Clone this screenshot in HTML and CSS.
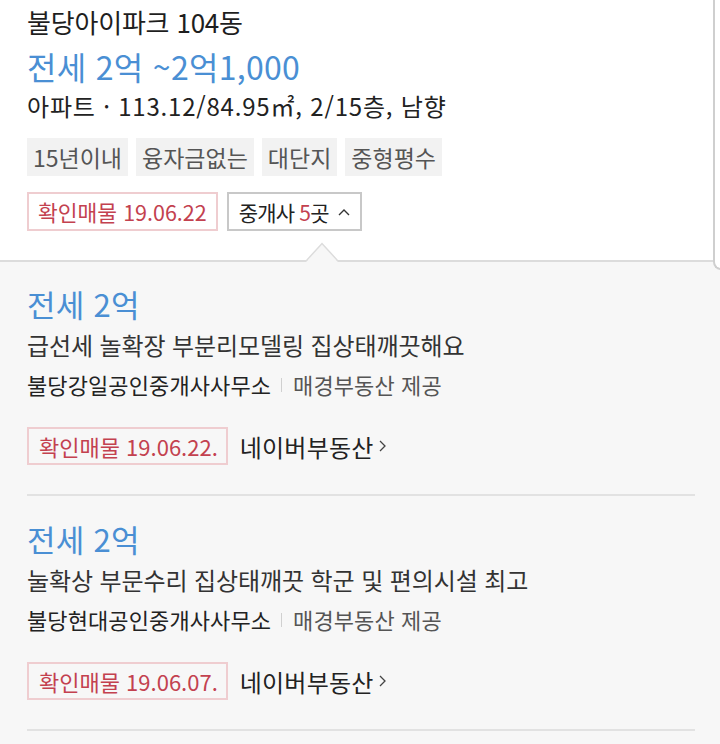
FILE: index.html
```html
<!DOCTYPE html>
<html lang="ko">
<head>
<meta charset="utf-8">
<link rel="stylesheet" href="styles.css">
</head>
<body>
<div class="page">
  <section class="summary">
    <div class="next-card"></div>
    <h1 class="apt-name">불당아이파크 104동</h1>
    <div class="price">전세 2억 ~2억1,000</div>
    <div class="spec">아파트 · 113.12/84.95㎡, 2/15층, 남향</div>
    <ul class="tags">
      <li class="tag">15년이내</li>
      <li class="tag">융자금없는</li>
      <li class="tag">대단지</li>
      <li class="tag">중형평수</li>
    </ul>
    <div class="badge-row">
      <span class="verified">확인매물 19.06.22</span>
      <button class="agents">중개사 <em>5</em>곳
        <svg class="chev-up" width="14" height="10" viewBox="0 0 14 10"><polyline points="2,8 7,3 12,8" fill="none" stroke="#333" stroke-width="1.4"/></svg>
      </button>
    </div>
    <svg class="notch" width="32" height="20" viewBox="0 0 32 20"><polygon points="0,20 16,2 32,20" fill="#f7f7f7"/><polyline points="0,19 16,1.5 32,19" fill="none" stroke="#dcdcdc" stroke-width="1.5"/></svg>
  </section>

  <section class="listings">
    <article class="item">
      <div class="item-price">전세 2억</div>
      <p class="desc">급선세 놀확장 부분리모델링 집상태깨끗해요</p>
      <div class="agency"><span class="agency-name">불당강일공인중개사사무소</span><span class="sep"></span><span class="provider">매경부동산 제공</span></div>
      <div class="item-foot">
        <span class="verified big">확인매물 19.06.22.</span>
        <a class="naver">네이버부동산<svg class="chev-right" width="10" height="16" viewBox="0 0 10 16"><polyline points="2,3 7,8 2,13" fill="none" stroke="#444" stroke-width="1.3"/></svg></a>
      </div>
    </article>
    <article class="item">
      <div class="item-price">전세 2억</div>
      <p class="desc">눌확상 부문수리 집상태깨끗 학군 및 편의시설 최고</p>
      <div class="agency"><span class="agency-name">불당현대공인중개사사무소</span><span class="sep"></span><span class="provider">매경부동산 제공</span></div>
      <div class="item-foot">
        <span class="verified big">확인매물 19.06.07.</span>
        <a class="naver">네이버부동산<svg class="chev-right" width="10" height="16" viewBox="0 0 10 16"><polyline points="2,3 7,8 2,13" fill="none" stroke="#444" stroke-width="1.3"/></svg></a>
      </div>
    </article>
  </section>
</div>
</body>
</html>
```

FILE: styles.css
```css
* { box-sizing: border-box; }
html, body {
  margin: 0;
  padding: 0;
  background: #f7f7f7;
  font-family: "Noto Sans CJK KR", "Noto Sans", sans-serif;
  color: #222;
  overflow: hidden;
}
.page { width: 720px; height: 744px; overflow: hidden; }

.summary {
  position: relative;
  background: #fff;
  width: 720px;
  padding: 4px 0 29px 27px;
  border-bottom: 2px solid #dcdcdc;
}
.next-card {
  position: absolute;
  left: 713px;
  top: -10px;
  width: 20px;
  height: 280px;
  border: 2px solid #cfcfcf;
  border-right: none;
  border-top: none;
  border-radius: 0 0 0 8px;
  background: #fff;
}
.apt-name {
  margin: 0;
  font-size: 26px;
  font-weight: 400;
  letter-spacing: -0.2px;
  line-height: 36px;
  color: #1e1e1e;
}
.price {
  font-size: 32px;
  letter-spacing: 0.3px;
  line-height: 52px;
  color: #4a8fd4;
}
.spec {
  font-size: 24px;
  letter-spacing: 0.8px;
  line-height: 28px;
  color: #222;
}
.tags {
  list-style: none;
  margin: 18px 0 0;
  padding: 0;
  display: flex;
  gap: 8px;
}
.tag {
  background: #f2f2f2;
  height: 38px;
  line-height: 38px;
  padding: 0 6px;
  font-size: 23px;
  letter-spacing: 0;
  color: #555;
}
.badge-row {
  margin-top: 16px;
  display: flex;
  gap: 9px;
  align-items: center;
}
.verified {
  display: inline-block;
  height: 39px;
  line-height: 36px;
  padding: 0 9px;
  border: 2px solid #efcdd0;
  font-size: 21.5px;
  letter-spacing: 0;
  color: #c3414f;
  background: #fff;
}
.agents {
  height: 39px;
  padding: 0 9px 0 10px;
  border: 2px solid #c8c8c8;
  background: #fff;
  font-family: inherit;
  font-size: 21px;
  letter-spacing: -0.8px;
  color: #222;
  display: flex;
  align-items: center;
}
.agents em { font-style: normal; color: #c3414f; margin-left: 5px; }
.chev-up { margin-left: 8px; }
.notch {
  position: absolute;
  left: 306px;
  bottom: -2px;
  display: block;
}

.listings { padding: 0 25px 0 27px; }
.item {
  padding: 20px 0 29px;
  border-bottom: 2px solid #e2e2e2;
}
.item + .item { padding-top: 21px; }
.item-price {
  font-size: 31px;
  letter-spacing: 0.3px;
  line-height: 44px;
  color: #4a8fd4;
}
.desc {
  margin: 0;
  font-size: 24px;
  letter-spacing: -0.1px;
  line-height: 38px;
  color: #333;
}
.agency {
  display: flex;
  align-items: center;
  height: 40px;
  font-size: 22px;
  letter-spacing: 0.1px;
}
.agency-name { color: #222; }
.sep {
  display: inline-block;
  width: 1px;
  height: 14px;
  background: #d0d0d0;
  margin: 2px 11px 0 10px;
}
.provider { color: #555; }
.item-foot {
  margin-top: 23px;
  display: flex;
  align-items: center;
  gap: 12px;
}
.verified.big {
  height: 38px;
  line-height: 35px;
  font-size: 22px;
  letter-spacing: 0;
  padding: 0 8px 0 10px;
  background: transparent;
}
.naver {
  font-size: 24px;
  letter-spacing: 0.2px;
  color: #222;
  display: flex;
  align-items: center;
}
.chev-right { margin-left: 5px; }
```
